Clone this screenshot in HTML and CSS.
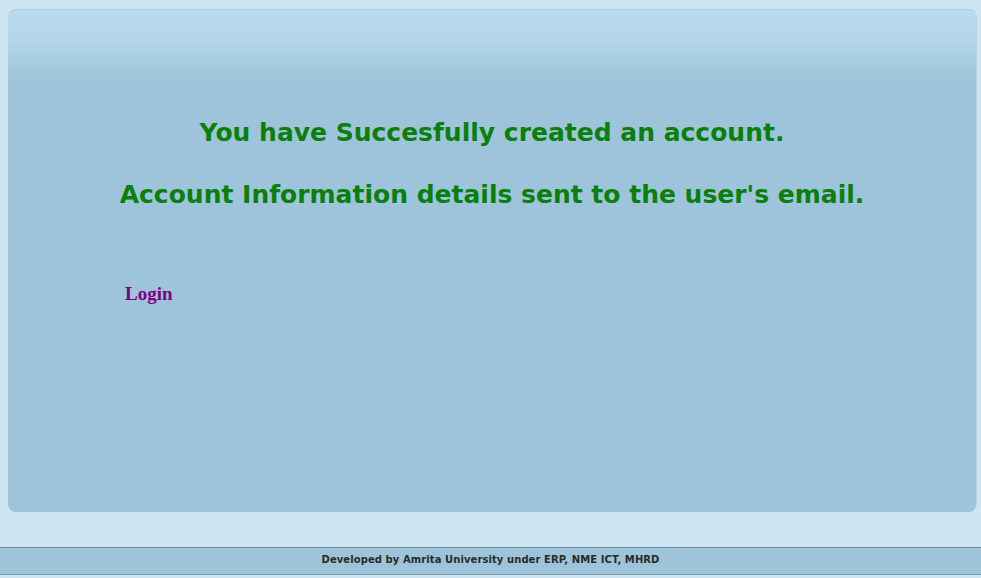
FILE: index.html
```html
<!DOCTYPE html>
<html>
<head>
<meta charset="utf-8">
<link rel="stylesheet" href="styles.css">
</head>
<body>
<div class="page">
  <div class="panel">
    <div class="messages">
      <h2 class="msg">You have Succesfully created an account.</h2>
      <h2 class="msg">Account Information details sent to the user's email.</h2>
    </div>
    <div class="links">
      <a class="login" href="#">Login</a>
    </div>
  </div>
  <div class="footer">Developed by Amrita University under ERP, NME ICT, MHRD</div>
</div>
</body>
</html>
```

FILE: styles.css
```css
html, body {
  margin: 0;
  padding: 0;
  background: #cee4f1;
}
.page {
  width: 981px;
  height: 578px;
  display: flex;
  flex-direction: column;
}
.panel {
  margin: 9px 4px 0 8px;
  height: 503px;
  box-sizing: border-box;
  border-radius: 8px;
  border-top: 1px solid #a9cfe2;
  border-right: 1px solid #b5d8ea;
  background: linear-gradient(to bottom, #b9ddee 0px, #b3d7e9 30px, #a3c8dd 62px, #9dc4da 75px, #9dc4da 100%);
  display: flex;
  flex-direction: column;
}
.messages {
  padding-top: 105px;
  display: flex;
  flex-direction: column;
  align-items: center;
  gap: 26px;
}
.msg {
  margin: 0;
  font-family: "DejaVu Sans", Verdana, sans-serif;
  font-weight: bold;
  font-size: 25px;
  line-height: 36px;
  color: #0a800a;
}
.links {
  padding: 70px 0 0 117px;
}
.login {
  font-family: "Liberation Serif", "Times New Roman", serif;
  font-weight: bold;
  font-size: 19px;
  color: #800080;
  text-decoration: none;
}
.footer {
  margin-top: 35px;
  height: 26px;
  border-top: 1px solid #6f8fa3;
  border-bottom: 1px solid #7a98aa;
  background: #9dc4d8;
  font-family: "DejaVu Sans", Verdana, sans-serif;
  font-weight: bold;
  font-size: 10px;
  letter-spacing: 0.08px;
  line-height: 24px;
  color: #2a2a2a;
  text-align: center;
}
```
